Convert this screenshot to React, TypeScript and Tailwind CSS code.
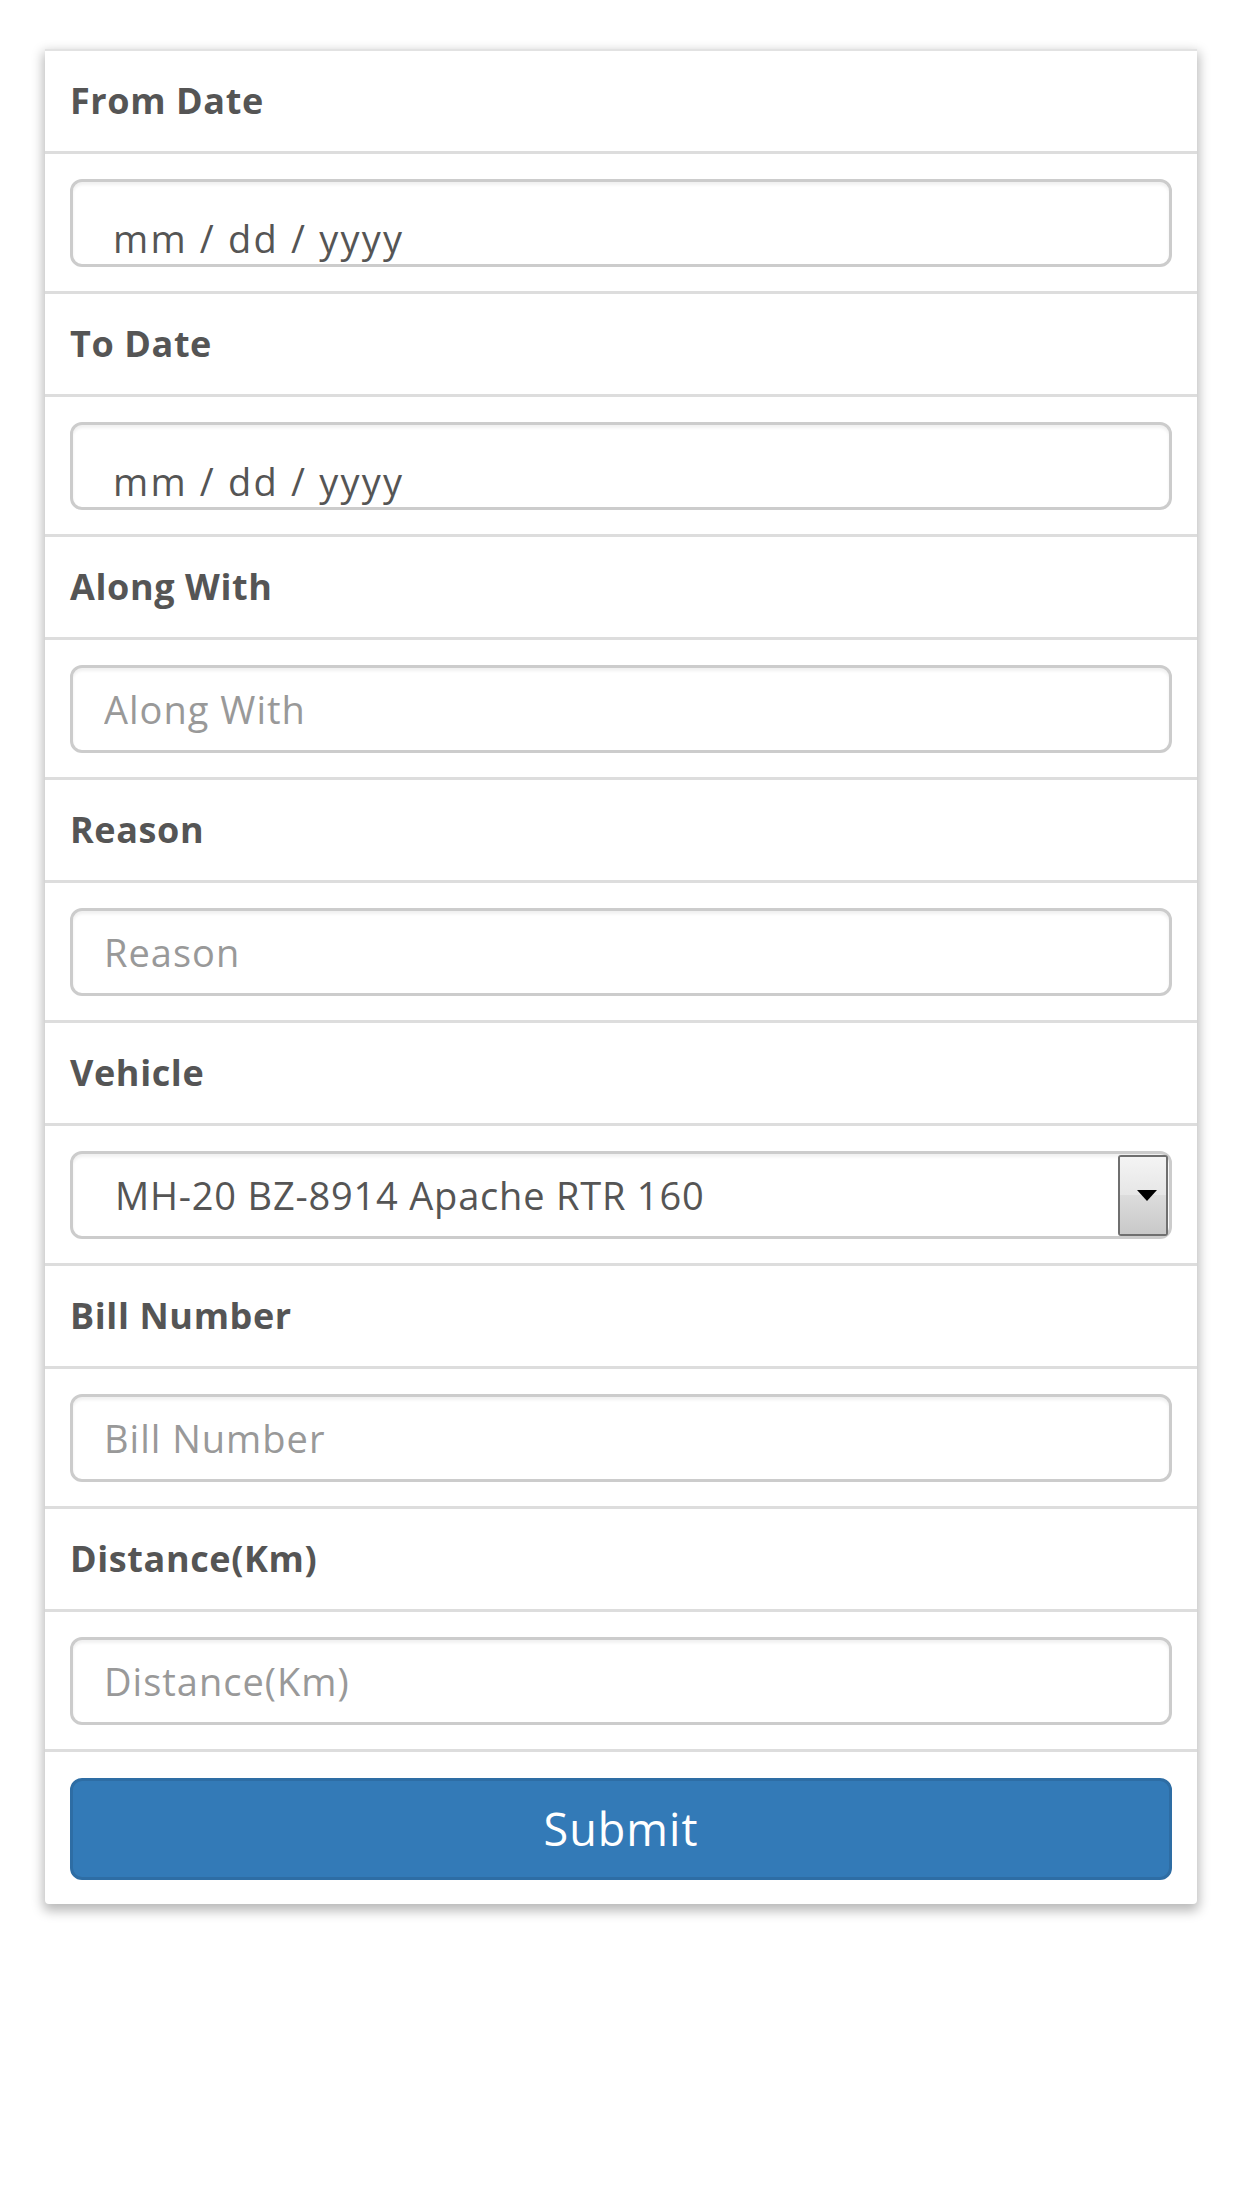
const FIELDS = [
  { label: "From Date", kind: "date" },
  { label: "To Date", kind: "date" },
  { label: "Along With", kind: "text" },
  { label: "Reason", kind: "text" },
  { label: "Vehicle", kind: "select" },
  { label: "Bill Number", kind: "text" },
  { label: "Distance(Km)", kind: "text" },
];

const font = { fontFamily: '"Open Sans", "Liberation Sans", sans-serif' };

function Control({ kind, label }: { kind: string; label: string }) {
  const box =
    "h-[88px] w-full rounded-[12px] border-[3px] border-[#cccccc] bg-white shadow-[inset_0_3px_3px_rgba(0,0,0,0.06)]";

  if (kind === "date") {
    return (
      <div className={`${box} flex items-end pl-[40px] pb-[4px] text-[38px] leading-none tracking-[2.2px] text-[#555555]`}>
        <span className="pb-[3px]">mm / dd / yyyy</span>
      </div>
    );
  }

  if (kind === "select") {
    return (
      <div className={`${box} flex items-center justify-between pl-[42px] pr-[1px]`}>
        <span className="text-[38px] leading-none tracking-[0.8px] text-[#555555]">MH-20 BZ-8914 Apache RTR 160</span>
        <div className="flex h-[81px] w-[50px] flex-col overflow-hidden rounded-[3px] border-2 border-[#6f6f6f]">
          <div className="h-1/2 bg-gradient-to-b from-[#f4f4f4] to-[#e6e6e6]" />
          <div className="h-1/2 bg-gradient-to-b from-[#dcdcdc] to-[#c9c9c9]" />
        </div>
      </div>
    );
  }

  return (
    <input
      placeholder={label}
      className={`${box} px-[31px] text-[38px] tracking-[1px] text-[#555555] outline-none placeholder:text-[#999999]`}
      style={font}
    />
  );
}

export default function App() {
  return (
    <div className="min-h-[2208px] bg-white pt-[49px]" style={font}>
      <div className="mx-[45px] overflow-hidden rounded-b-[4px] border-t-2 border-[#e2e2e2] bg-white shadow-[0_5px_12px_2px_rgba(0,0,0,0.28)]">
        {FIELDS.map((f) => (
          <div key={f.label}>
            <div className="flex h-[103px] items-center border-b-[3px] border-[#dddddd] px-[25px]">
              <span className="text-[36px] font-bold tracking-[0.6px] text-[#555555]">{f.label}</span>
            </div>
            <div className="relative border-b-[3px] border-[#dddddd] px-[25px] pt-[25px] pb-[24px]">
              <Control kind={f.kind} label={f.label} />
              {f.kind === "select" && (
                <svg
                  className="absolute right-[40px] top-[64px]"
                  width="20"
                  height="11"
                  viewBox="0 0 20 11"
                >
                  <polygon points="0,0 20,0 10,11" fill="#000000" />
                </svg>
              )}
            </div>
          </div>
        ))}
        <div className="px-[25px] pt-[26px] pb-[24px]">
          <button className="flex h-[102px] w-full items-center justify-center rounded-[12px] border-[3px] border-[#2e6da4] bg-[#337ab7] text-[45px] tracking-[1px] text-white">
            Submit
          </button>
        </div>
      </div>
    </div>
  );
}
